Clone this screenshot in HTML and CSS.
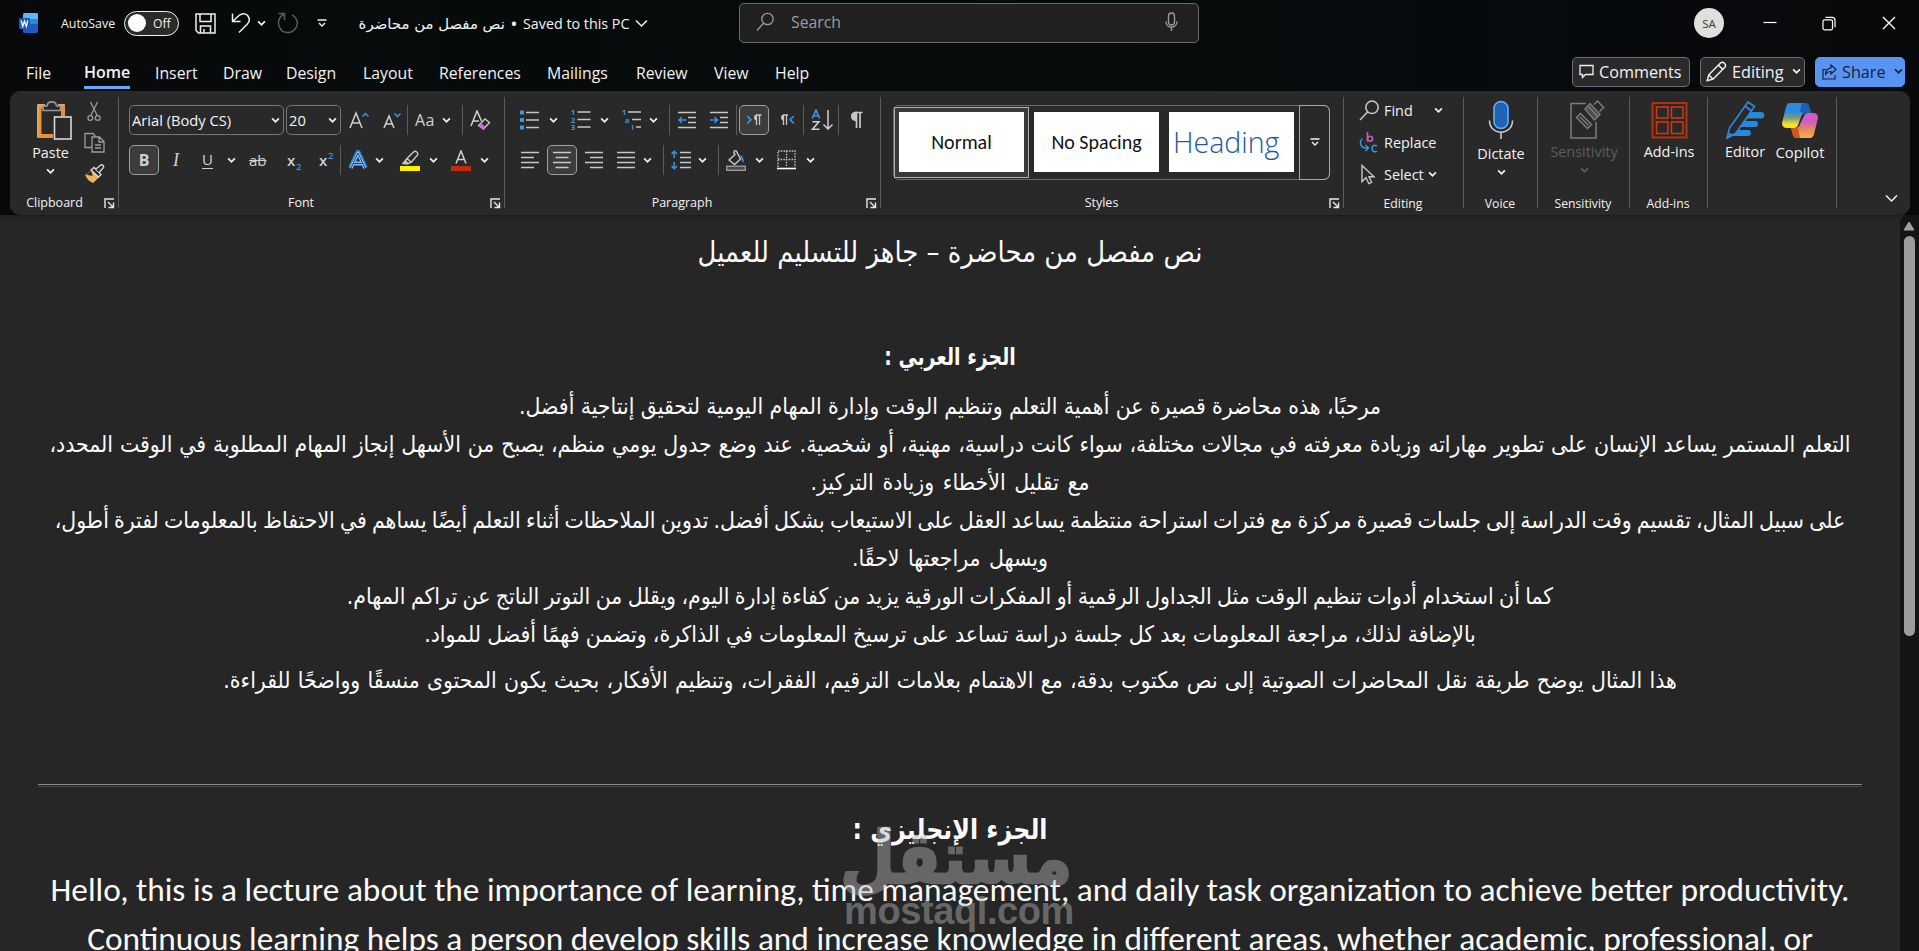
FILE: index.html
```html
<!DOCTYPE html>
<html lang="en">
<head>
<meta charset="utf-8">
<title>Word</title>
<link rel="stylesheet" href="styles.css">
</head>
<body>
<svg class="defs" width="0" height="0">
  <symbol id="chev" viewBox="0 0 8 6"><path d="M1 1.200l3 3 3-3" fill="none" stroke="currentColor" stroke-width="1.600"/></symbol>
  <symbol id="launch" viewBox="0 0 11 11"><path d="M1 10V1h9M4 4l5 5M9.500 4.500v5h-5" fill="none" stroke="#e8e8e8" stroke-width="1.400"/></symbol>
</svg>

<header class="top">
  <div class="titlebar">
    <svg class="i-word" width="20" height="22" viewBox="0 0 20 22"><rect x="4" y="1" width="15" height="20" rx="1.500" fill="#1b5cbe"/><path d="M4 2.500q0-1.500 1.500-1.500h12q1.500 0 1.500 1.500v5H4z" fill="#64b5f6"/><path d="M4 7.500h15v4.500H4z" fill="#2b8ad8"/><rect x="0" y="6" width="11" height="11" rx="1" fill="#185abd"/><path d="M2.200 8.500l1.500 6 1.800-5.500 1.800 5.500 1.500-6" fill="none" stroke="#fff" stroke-width="1.300"/></svg>
    <span class="autosave">AutoSave</span>
    <div class="toggle"><i></i><span>Off</span></div>
    <svg class="i-save" width="21" height="21" viewBox="0 0 21 21" fill="none" stroke="#f0f0f0" stroke-width="1.500"><path d="M1 1h19v19H3.500L1 17.500z"/><path d="M5 1v7.500h11V1M5.500 20v-7h10v7M9 20v-4"/></svg>
    <svg class="i-undo" width="20" height="22" viewBox="0 0 20 22" fill="none" stroke="#f0f0f0" stroke-width="1.500"><path d="M1.500 1.500v8h8M1.500 9.500L8 3.500c3-2.500 7-2.500 9 .5s1.500 6-.8 8.200L8 20.500"/></svg>
    <svg class="chev" width="9" height="7"><use href="#chev"/></svg>
    <svg class="i-redo" width="22" height="22" viewBox="0 0 22 22" fill="none" stroke="#5a5c5c" stroke-width="1.500"><path d="M1.500 1.500h6v6.500M7.300 2C1 5 0 12 3.500 17s11.500 4.500 15-.5S20 5.500 15 2.800"/></svg>
    <svg class="i-qat" width="10" height="9" viewBox="0 0 10 9" fill="none" stroke="#f0f0f0" stroke-width="1.400"><path d="M.5 1h9M2 4l3 3 3-3"/></svg>
    <div class="docname"><span dir="rtl" class="ar-name">نص مفصل من محاضرة</span><b>•</b><span>Saved to this PC</span><svg width="13" height="9" viewBox="0 0 13 9"><path d="M1 1.500l5.500 5.500L12 1.500" fill="none" stroke="#f0f0f0" stroke-width="1.500"/></svg></div>
    <div class="search">
      <svg width="19" height="20" viewBox="0 0 19 20" fill="none" stroke="#9a9a9a" stroke-width="1.300"><circle cx="11.500" cy="7" r="5.700"/><path d="M7.500 11.200L1 18.500"/></svg>
      <span>Search</span>
      <svg width="13" height="20" viewBox="0 0 13 20" fill="none" stroke="#9a9a9a" stroke-width="1.400"><rect x="3.500" y="1" width="6" height="12" rx="3"/><path d="M1 9.500c0 7.500 11 7.500 11 0M6.500 15.200V19"/></svg>
    </div>
    <div class="avatar">SA</div>
    <svg class="i-win" width="14" height="14" viewBox="0 0 14 14"><path d="M.5 6.500h13" stroke="#fff" stroke-width="1.200"/></svg>
    <svg class="i-win" width="14" height="15" viewBox="0 0 14 15" fill="none" stroke="#fff" stroke-width="1.200"><rect x="1" y="3.800" width="9.500" height="10" rx="1.500"/><path d="M3.500 1.300H10q3 0 3 3v7"/></svg>
    <svg class="i-win" width="14" height="14" viewBox="0 0 14 14"><path d="M1 1l12 12M13 1L1 13" stroke="#fff" stroke-width="1.400"/></svg>
  </div>

  <nav class="tabs">
    <span>File</span><span class="on">Home</span><span>Insert</span><span>Draw</span><span>Design</span><span>Layout</span><span>References</span><span>Mailings</span><span>Review</span><span>View</span><span>Help</span>
    <div class="actions">
      <div class="act comments"><svg width="15" height="15" viewBox="0 0 15 15" fill="none" stroke="#f0f0f0" stroke-width="1.300"><path d="M1 1.500h13v9H6.500l-3 3v-3H1z"/></svg>Comments</div>
      <div class="act editing"><svg width="21" height="21" viewBox="0 0 21 21" fill="none" stroke="#f0f0f0" stroke-width="1.500"><path d="M1.200 19.800l1.600-6L14.500 2c2.500-2.300 6.500 1.500 4.300 4.300L7 18.200zM12.500 4.200l4.300 4.200M3 14l3.800 4"/></svg>Editing<svg class="chev" width="9" height="7"><use href="#chev"/></svg></div>
      <div class="act share"><svg width="15" height="16" viewBox="0 0 15 16" fill="none" stroke="#12213a" stroke-width="1.200"><path d="M4 5.500H1V15h12v-4M9 1l5 4.500L9 10V7.500c-3 0-4.500 1-5.500 3.500 0-4 2-7 5.500-7z"/></svg>Share<svg class="chev" width="9" height="7"><use href="#chev"/></svg></div>
    </div>
  </nav>

  <section class="ribbon">
    <div class="group g-clip">
      <div class="clip-body">
        <div class="big paste">
          <svg width="36" height="40" viewBox="0 0 36 40" fill="none"><path d="M9 5.500H3.500V35H17M22 5.500h5V15" stroke="#e8913a" stroke-width="4"/><path d="M9 3.800H1.800V36.500M22 3.800h6.500" stroke="#f6cf8c" stroke-width="1"/><path d="M7 9.500V5h4c.5-5.500 9-5.500 9.500 0h4v4.500z" fill="#292929" stroke="#9a9a9a" stroke-width="1.600"/><rect x="18.500" y="16" width="16.500" height="22" fill="#292929" stroke="#d6d6d6" stroke-width="1.600"/></svg>
          <span>Paste</span><svg class="chev" width="9" height="7"><use href="#chev"/></svg>
        </div>
        <div class="clip-col">
          <svg width="14" height="21" viewBox="0 0 14 21" fill="none" stroke="#9c9c9c" stroke-width="1.300"><path d="M3.500 1l6.700 13.500M10.500 1L3.800 14.500"/><circle cx="3.300" cy="17" r="2.400"/><circle cx="10.700" cy="17" r="2.400"/></svg>
          <svg width="21" height="21" viewBox="0 0 21 21" fill="none" stroke="#9c9c9c" stroke-width="1.300"><path d="M7.500 15.500H1V1.500h8l2.500 3"/><path d="M8 5h7.500l4.500 4.500V20H8zM15 5v5h5M11 13h6M11 16h6"/></svg>
          <svg width="21" height="20" viewBox="0 0 21 20" fill="none" stroke="#d8d8d8" stroke-width="1.400"><path d="M1 10.500l7-4 7.500 6.500-6.500 6q-6-2.500-8-8.500z" fill="#f2b25c" stroke="none"/><path d="M1.500 10.500l6-3.500 1 5z" fill="#292929" stroke="none"/><path d="M7 6l3-2.500 7 7L14.500 13z" fill="#292929"/><path d="M12 5l4.500-3.800c2-1.200 4 1 2.700 2.700L15 8.500" fill="#292929"/></svg>
        </div>
      </div>
      <div class="label"><span>Clipboard</span><svg width="11" height="11"><use href="#launch"/></svg></div>
    </div>

    <div class="group g-font">
      <div class="row f1">
        <div class="combo name">Arial (Body CS)<svg class="chev" width="9" height="7"><use href="#chev"/></svg></div>
        <div class="combo size">20<svg class="chev" width="9" height="7"><use href="#chev"/></svg></div>
        <svg width="20" height="18" viewBox="0 0 20 18" fill="none"><path d="M1 17L7 2l6 15M3.200 12h7.600" stroke="#d0d0d0" stroke-width="1.500"/><path d="M13.500 5.500L16.500 2.500l3 3" stroke="#3a96e8" stroke-width="1.500"/></svg>
        <svg width="18" height="18" viewBox="0 0 18 18" fill="none"><path d="M1 17L6 5l5 12M3 13h6" stroke="#d0d0d0" stroke-width="1.500"/><path d="M11.500 2.500l3 3 3-3" stroke="#3a96e8" stroke-width="1.500"/></svg>
        <i class="sep"></i>
        <span class="aa">Aa</span>
        <svg class="chev" width="9" height="7"><use href="#chev"/></svg>
        <i class="sep"></i>
        <svg width="21" height="21" viewBox="0 0 21 21" fill="none"><path d="M1 16L7 1l4.500 10M3.200 11H9" stroke="#d0d0d0" stroke-width="1.500"/><path d="M8.500 15.500L15 9l4.500 3.500L13.500 19z" stroke="#c8c8c8" stroke-width="1.400"/><path d="M8.500 15.500l2.500-2.500 4.500 4-2 2.500z" fill="#d46ad0"/></svg>
      </div>
      <div class="row f2">
        <div class="press"><b>B</b></div>
        <span class="ital">I</span>
        <span class="undl">U</span>
        <svg class="chev" width="9" height="7"><use href="#chev"/></svg>
        <span class="strk">ab</span>
        <span class="sub">x<em>2</em></span>
        <span class="sup">x<em>2</em></span>
        <i class="sep"></i>
        <svg width="20" height="20" viewBox="0 0 20 20" fill="none" stroke-linejoin="round"><path d="M2.500 18L10 2l7.500 16M5.500 13.500h9" stroke="#2a7fd0" stroke-width="5"/><path d="M3 18L10 3l7 15M5.500 13.500h9" stroke="#9cd0ff" stroke-width="2.600"/><path d="M3 18L10 3l7 15M5.500 13.500h9" stroke="#1d3d63" stroke-width="1"/></svg>
        <svg class="chev" width="9" height="7"><use href="#chev"/></svg>
        <svg width="20" height="21" viewBox="0 0 20 21" fill="none"><path d="M3 13.500l4-5L13.500 2c2-2 5.500 1 3.800 3.200L11.500 12l-4 2zM7 8.500l4.500 4" stroke="#c8c8c8" stroke-width="1.400"/><path d="M2 14l4-4 2.500 3.500z" fill="#c8c8c8"/><path d="M0 16h20v5H0z" fill="#fff200"/></svg>
        <svg class="chev" width="9" height="7"><use href="#chev"/></svg>
        <svg width="20" height="21" viewBox="0 0 20 21" fill="none"><path d="M5 13.500L10 1l5 12.500M6.800 9.500h6.400" stroke="#d0d0d0" stroke-width="1.500"/><path d="M0 16h20v5H0z" fill="#c42b0c"/></svg>
        <svg class="chev" width="9" height="7"><use href="#chev"/></svg>
      </div>
      <div class="label"><span>Font</span><svg width="11" height="11"><use href="#launch"/></svg></div>
    </div>

    <div class="group g-para">
      <div class="row p1">
        <svg width="20" height="20" viewBox="0 0 20 20"><path d="M0 .5h4v4H0zM0 8h4v4H0zM0 15.500h4v4H0z" fill="#3a96e8"/><path d="M6 2.500h13M6 10h13M6 17.500h13" stroke="#c8c8c8" stroke-width="1.500"/></svg>
        <svg class="chev" width="9" height="7"><use href="#chev"/></svg>
        <svg width="22" height="28" viewBox="-1 -3.500 22 28"><g class="num"><text x="0" y="5.500">1</text><text x="0" y="13">2</text><text x="0" y="20.500">3</text></g><path d="M6.500 2.500h13M6.500 10h13M6.500 17.500h13" stroke="#c8c8c8" stroke-width="1.500"/></svg>
        <svg class="chev" width="9" height="7"><use href="#chev"/></svg>
        <svg width="22" height="28" viewBox="-1 -3.500 22 28"><g class="num"><text x="0" y="5.500">1</text><text x="3" y="13">a</text><text x="9.500" y="20.500">i</text></g><path d="M6 2.500h13M10 10h9M14 17.500h5" stroke="#c8c8c8" stroke-width="1.500"/></svg>
        <svg class="chev" width="9" height="7"><use href="#chev"/></svg>
        <i class="sep"></i>
        <svg width="19" height="20" viewBox="0 0 19 20" fill="none"><path d="M0 2.500h18M10 7.500h8M10 12.500h8M0 17.500h18" stroke="#c8c8c8" stroke-width="1.500"/><path d="M8.500 10H1M4 7l-3 3 3 3" stroke="#3a96e8" stroke-width="1.500"/></svg>
        <svg width="19" height="20" viewBox="0 0 19 20" fill="none"><path d="M0 2.500h18M10 7.500h8M10 12.500h8M0 17.500h18" stroke="#c8c8c8" stroke-width="1.500"/><path d="M0 10h7.500M4.500 7l3 3-3 3" stroke="#3a96e8" stroke-width="1.500"/></svg>
        <i class="sep"></i>
        <div class="press"><svg width="16" height="12" viewBox="0 0 16 12" fill="none"><path d="M1 2l4 3.700L1 9.500" stroke="#3a96e8" stroke-width="1.600"/><path d="M15.500 1H10M10.500 1v10M13.500 1v10" stroke="#c8c8c8" stroke-width="1.300"/><path d="M11 .5a3 3 0 0 0 0 6z" fill="#c8c8c8"/></svg></div>
        <svg width="16" height="12" viewBox="0 0 16 12" fill="none"><path d="M15 2l-4 3.700 4 3.800" stroke="#3a96e8" stroke-width="1.600"/><path d="M9 1H4M4.500 1v10M7.500 1v10" stroke="#c8c8c8" stroke-width="1.300"/><path d="M5 .5a3 3 0 0 0 0 6z" fill="#c8c8c8"/></svg>
        <i class="sep"></i>
        <svg width="22" height="22" viewBox="0 0 22 22" fill="none"><path d="M1.300 9.500L5 1l3.700 8.500M2.500 6.700h5" stroke="#3a96e8" stroke-width="1.600"/><path d="M1.500 12.700h6.500L1.500 20.200H8.500M17 1v19M12.500 15.500L17 20l4.500-4.500" stroke="#d0d0d0" stroke-width="1.500"/></svg>
        <i class="sep"></i>
        <svg width="14" height="18" viewBox="0 0 14 18" fill="none"><path d="M13.500 1.500H6M7.500 1.500V17M11 1.500V17" stroke="#c8c8c8" stroke-width="1.700"/><path d="M8 .7H6a4.700 4.700 0 0 0 0 9.300h2z" fill="#c8c8c8"/></svg>
      </div>
      <div class="row p2">
        <svg width="19" height="18" viewBox="0 0 19 18"><path d="M0 1.500h18M0 6.500h13M0 11.500h18M0 16.500h13" stroke="#c8c8c8" stroke-width="1.500"/></svg>
        <div class="press"><svg width="18" height="18" viewBox="0 0 18 18"><path d="M0 1.500h18M2.500 6.500h13M0 11.500h18M2.500 16.500h13" stroke="#c8c8c8" stroke-width="1.500"/></svg></div>
        <svg width="18" height="18" viewBox="0 0 18 18"><path d="M0 1.500h18M5 6.500h13M0 11.500h18M5 16.500h13" stroke="#c8c8c8" stroke-width="1.500"/></svg>
        <svg width="18" height="18" viewBox="0 0 18 18"><path d="M0 1.500h18M0 6.500h18M0 11.500h18M0 16.500h18" stroke="#c8c8c8" stroke-width="1.500"/></svg>
        <svg class="chev" width="9" height="7"><use href="#chev"/></svg>
        <i class="sep"></i>
        <svg width="20" height="20" viewBox="0 0 20 20" fill="none"><path d="M9 2.500h11M9 7.500h11M9 12.500h11M9 17.500h11" stroke="#c8c8c8" stroke-width="1.500"/><path d="M3.200 8V1.500M.5 4l2.700-2.700L6 4M3.200 12v6.500M.5 16l2.700 2.700L6 16" stroke="#3a96e8" stroke-width="1.500"/></svg>
        <svg class="chev" width="9" height="7"><use href="#chev"/></svg>
        <i class="sep"></i>
        <svg width="20" height="21" viewBox="0 0 20 21" fill="none"><path d="M9 4.500L3 10l5.500 4.500L14.500 9 10.500 1.500c-1.500-2-3 0-2.500 1.500z" stroke="#c8c8c8" stroke-width="1.400"/><path d="M14 5c3 1 4 4 3.500 8-1.500-1-2-3-2-4.500z" fill="#3a96e8"/><rect x=".7" y="16.200" width="18.600" height="4.100" fill="#4a4a4a" stroke="#a8a8a8" stroke-width="1.200"/></svg>
        <svg class="chev" width="9" height="7"><use href="#chev"/></svg>
        <svg width="19" height="20" viewBox="0 0 19 20" fill="none"><path d="M1 17V1h17v16M9.500 1v16M1 9.500h17" stroke="#c8c8c8" stroke-width="1.300" stroke-dasharray="1.500 1.200"/><path d="M0 18.500h19" stroke="#fff" stroke-width="1.600"/></svg>
        <svg class="chev" width="9" height="7"><use href="#chev"/></svg>
      </div>
      <div class="label"><span>Paragraph</span><svg width="11" height="11"><use href="#launch"/></svg></div>
    </div>

    <div class="group g-styles">
      <div class="gallery">
        <div class="cell sel"><div>Normal</div></div>
        <div class="cell"><div>No Spacing</div></div>
        <div class="cell"><div class="h1style"><span>Heading 1</span></div></div>
        <div class="more"><svg width="10" height="9" viewBox="0 0 10 9" fill="none" stroke="#f0f0f0" stroke-width="1.400"><path d="M.5 1h9M2 4l3 3 3-3"/></svg></div>
      </div>
      <div class="label"><span>Styles</span><svg width="11" height="11"><use href="#launch"/></svg></div>
    </div>

    <div class="group g-edit">
      <div class="cmd"><svg width="20" height="21" viewBox="0 0 20 21" fill="none" stroke="#c8c8c8" stroke-width="1.500"><circle cx="13" cy="7.300" r="6.200"/><path d="M8.500 12L1 20"/></svg><span>Find</span><svg class="chev far" width="9" height="7"><use href="#chev"/></svg></div>
      <div class="cmd"><svg width="20" height="21" viewBox="0 0 20 21" fill="none"><path d="M8.500 0v9.500" stroke="#c05fb4" stroke-width="1.700"/><circle cx="11" cy="6.700" r="2.500" stroke="#c05fb4" stroke-width="1.600"/><path d="M3.500 6.500C.5 9 .5 14.500 6 16h2.500M6.500 13l2.800 3-2.800 3M18 14c-3-2-5 0-5 2.500s2.500 4.500 5 2.500" stroke="#3a96e8" stroke-width="1.500"/></svg><span>Replace</span></div>
      <div class="cmd"><svg width="20" height="21" viewBox="0 0 20 21" fill="none" stroke="#c8c8c8" stroke-width="1.400"><path d="M3 1.500v16l4-3.800 2.800 6 2.800-1.200L10 12.800h5z"/></svg><span>Select</span><svg class="chev near" width="9" height="7"><use href="#chev"/></svg></div>
      <div class="label solo"><span>Editing</span></div>
    </div>

    <div class="group g-voice">
      <div class="big">
        <svg width="26" height="40" viewBox="0 0 26 40" fill="none"><rect x="6" y="1.500" width="14" height="27" rx="7" fill="#2063b4" stroke="#5fb0f5" stroke-width="1.600"/><path d="M1.500 20.500c0 15.500 23 15.500 23 0M13 32v7" stroke="#d0d0d0" stroke-width="1.500"/></svg>
        <span>Dictate</span><svg class="chev" width="9" height="7"><use href="#chev"/></svg>
      </div>
      <div class="label solo"><span>Voice</span></div>
    </div>

    <div class="group g-sens">
      <div class="big dim">
        <svg width="36" height="40" viewBox="0 0 36 40" fill="none" stroke="#7c7c7c" stroke-width="1.500"><path d="M17 3.500H2V38h25V22"/><path d="M7.500 17.500l4-4 11 11-4 4zM10.800 16.800l8.500 8.500"/><path d="M16 9l5-5.500 10 11-5.500 5.500z" fill="#4a4a4a"/><path d="M25 4.500l3.500-3.500 6 6.500-4 4M19.500 6.500l9 10"/></svg>
        <span>Sensitivity</span><svg class="chev" width="9" height="7"><use href="#chev"/></svg>
      </div>
      <div class="label solo"><span>Sensitivity</span></div>
    </div>

    <div class="group g-add">
      <div class="big">
        <svg width="37" height="40" viewBox="0 0 37 40" fill="none" stroke="#d8380e" stroke-width="1.500"><rect x="1.500" y="3" width="34" height="34.500" stroke-width="2" stroke="#b5300f"/><path d="M5.500 7h11.500v11H5.500zM20.500 7H32v11H20.500zM5.500 22h11.500v11.500H5.500zM20.500 22H32v11.500H20.500z"/></svg>
        <span>Add-ins</span>
      </div>
      <div class="label solo"><span>Add-ins</span></div>
    </div>

    <div class="group g-cop">
      <div class="big ed">
        <svg width="40" height="40" viewBox="0 0 40 40" fill="none"><path d="M21 12h15a3 3 0 0 1 0 6.500H17zM15 21h15a3 3 0 0 1 0 6H11zM10 30h13a3 3 0 0 1 0 6H6z" fill="#2b88d8"/><path d="M2 38l2.500-10L23 2l6.500 4.500L11 33zM20 6l6.500 5" fill="#292929" stroke="#2b88d8" stroke-width="1.700"/><path d="M2 39l2.500-6.500 4 3z" fill="#2b88d8"/></svg>
        <span>Editor</span>
      </div>
      <div class="big co">
        <svg width="38" height="40" viewBox="0 0 38 40">
          <defs><linearGradient id="ca" x1="0" y1="0" x2="0" y2="1"><stop offset=".35" stop-color="#2b8be0"/><stop offset=".6" stop-color="#7f9a80"/><stop offset=".85" stop-color="#f5e426"/></linearGradient><linearGradient id="cb" x1="0" y1="0" x2="0" y2="1"><stop offset=".35" stop-color="#cf5cc4"/><stop offset=".7" stop-color="#e8914e"/><stop offset="1" stop-color="#f0b060"/></linearGradient></defs>
          <path d="M9 3h15q3 0 4 3l2 7h-5q-4 0-5 4l-3 8q-1 3-4 3H6q-5 0-5-5L5 7q1-4 4-4z" fill="url(#ca)"/>
          <path d="M21 3h3q3 0 4 3l2 7h-8q-3 0-3-3z" fill="#1c5fb4"/>
          <path d="M29 38H16q-3 0-4-3l-2-7h4q4 0 5-4l4-8q1-3 4-3h5q5 0 5 5l-4 16q-1 4-4 4z" fill="url(#cb)"/>
          <path d="M10 28h7l2 10h-3q-3 0-4-3z" fill="#d2571c"/>
        </svg>
        <span>Copilot</span>
      </div>
    </div>
    <div class="collapse"><svg width="13" height="9" viewBox="0 0 13 9"><path d="M1 1.500l5.500 5.500L12 1.500" fill="none" stroke="#f0f0f0" stroke-width="1.500"/></svg></div>
  </section>
</header>

<main class="stage">
  <article class="page">
    <h1 dir="rtl">نص مفصل من محاضرة – جاهز للتسليم للعميل</h1>
    <h2 dir="rtl">الجزء العربي :</h2>
    <p dir="rtl" class="l1">مرحبًا، هذه محاضرة قصيرة عن أهمية التعلم وتنظيم الوقت وإدارة المهام اليومية لتحقيق إنتاجية أفضل.</p>
    <p dir="rtl" class="l2">التعلم المستمر يساعد الإنسان على تطوير مهاراته وزيادة معرفته في مجالات مختلفة، سواء كانت دراسية، مهنية، أو شخصية. عند وضع جدول يومي منظم، يصبح من الأسهل إنجاز المهام المطلوبة في الوقت المحدد،</p>
    <p dir="rtl" class="l3">مع تقليل الأخطاء وزيادة التركيز.</p>
    <p dir="rtl" class="l4">على سبيل المثال، تقسيم وقت الدراسة إلى جلسات قصيرة مركزة مع فترات استراحة منتظمة يساعد العقل على الاستيعاب بشكل أفضل. تدوين الملاحظات أثناء التعلم أيضًا يساهم في الاحتفاظ بالمعلومات لفترة أطول،</p>
    <p dir="rtl" class="l5">ويسهل مراجعتها لاحقًا.</p>
    <p dir="rtl" class="l6">كما أن استخدام أدوات تنظيم الوقت مثل الجداول الرقمية أو المفكرات الورقية يزيد من كفاءة إدارة اليوم، ويقلل من التوتر الناتج عن تراكم المهام.</p>
    <p dir="rtl" class="l7">بالإضافة لذلك، مراجعة المعلومات بعد كل جلسة دراسة تساعد على ترسيخ المعلومات في الذاكرة، وتضمن فهمًا أفضل للمواد.</p>
    <p dir="rtl" class="l8">هذا المثال يوضح طريقة نقل المحاضرات الصوتية إلى نص مكتوب بدقة، مع الاهتمام بعلامات الترقيم، الفقرات، وتنظيم الأفكار، بحيث يكون المحتوى منسقًا وواضحًا للقراءة.</p>
    <hr>
    <h2 dir="rtl" class="en-head">الجزء الإنجليزي :</h2>
    <p class="en">Hello, this is a lecture about the importance of learning, time management, and daily task organization to achieve better productivity.</p>
    <p class="en">Continuous learning helps a person develop skills and increase knowledge in different areas, whether academic, professional, or</p>
  </article>
  <aside class="scroll"><svg width="12" height="10" viewBox="0 0 12 10"><path d="M6 1l5 8H1z" fill="#a0a0a0" stroke="#a0a0a0" stroke-linejoin="round"/></svg><i></i></aside>
</main>

<div class="watermark"><span class="wm-ar" dir="rtl">مستقل</span><span class="wm-en">mostaql.com</span></div>
</body>
</html>
```
FILE: styles.css
```css
* { box-sizing: border-box; margin: 0; padding: 0; }
body {
  width: 1919px; height: 951px; overflow: hidden;
  background: #08090b; color: #f2f2f2;
  font-family: "Open Sans", "DejaVu Sans", sans-serif;
  font-size: 14.4px; white-space: nowrap;
}
svg { display: block; flex: none; }
.defs { position: absolute; }
i, em { font-style: normal; }
.chev { color: #f0f0f0; }

.top { height: 215px; background: linear-gradient(90deg, #08090a, #060b0a 25%, #050c0a 60%, #060a0e 75%, #08090b); }

/* title bar */
.titlebar { height: 47px; display: flex; align-items: center; padding-left: 19px; padding-bottom: 1px; }
.autosave { font-size: 12.4px; margin-left: 22px; width: 63px; }
.toggle { width: 55px; height: 25px; border: 1.5px solid #f0f0f0; border-radius: 13px; background: #2a2a2a; display: flex; align-items: center; padding-left: 3px; font-size: 12.2px; }
.toggle i { width: 18px; height: 18px; border-radius: 50%; background: #fff; margin-right: 7px; }
.i-save { margin-left: 16px; }
.i-undo { margin-left: 15px; margin-right: 6px; }
.i-redo { margin-left: 11px; }
.i-qat { margin-left: 18px; }
.docname { display: flex; align-items: center; margin-left: 31px; width: 381px; font-size: 14.3px; padding-top: 1px; }
.ar-name { font-family: "DejaVu Sans", sans-serif; font-size: 14.9px; width: 147px; }
.docname b { width: 18px; text-align: center; }
.docname svg { margin-left: 6px; }
.search { width: 460px; height: 40px; border: 1px solid #6b6b6b; border-radius: 5px; background: #202020; color: #9c9c9c; display: flex; align-items: center; padding: 0 20px 2px 16px; font-size: 15.8px; }
.search span { margin-left: 16px; margin-right: auto; }
.avatar { width: 30px; height: 30px; border-radius: 50%; background: #e0dfde; color: #3a3a3a; margin-left: 495px; font-size: 11.5px; display: flex; align-items: center; justify-content: center; }
.i-win { margin-left: 39px; margin-right: 7px; }
.i-win ~ .i-win { margin-left: 38px; margin-right: 8px; }

/* tabs */
.tabs { height: 44px; display: grid; align-items: center; font-size: 15.8px; padding: 8px 14px 0 26px;
  grid-template-columns: 58px 71px 68px 63px 77px 76px 108px 89px 78px 61px auto 1fr; }
.tabs > span { line-height: 22px; padding-bottom: 1px; justify-self: start; }
.tabs .on { font-weight: 600; height: 32px; padding-top: 4px; border-bottom: 3px solid #62abf5; font-size: 16px; }
.actions { display: flex; justify-self: end; gap: 10px; padding-bottom: 3px; }
.act { height: 30px; border: 1px solid #6e6e6e; border-radius: 5px; background: #2a2a2a; display: flex; align-items: center; gap: 5px; font-size: 16.2px; padding-left: 6px; }
.comments { width: 118px; }
.editing { width: 105px; padding-left: 5px; }
.editing .chev, .share .chev { margin-left: 3px; }
.share { width: 90px; background: #5a94f2; border-color: #5a94f2; color: #12213a; }
.share .chev { color: #12213a; }

/* ribbon */
.ribbon { margin: 0 9px 0 10px; height: 124px; border-radius: 10px; background: #292929; display: flex; }
.group { height: 124px; flex: none; padding-top: 14px; background: linear-gradient(#5c5c5c, #5c5c5c) no-repeat right 6px / 1px 111px; }
.g-clip { width: 109px; } .g-font { width: 386px; } .g-para { width: 376px; } .g-styles { width: 463px; }
.g-edit { width: 120px; } .g-voice { width: 74px; } .g-sens { width: 92px; } .g-add { width: 78px; } .g-cop { width: 129px; }
.row { height: 30px; margin-bottom: 10px; display: grid; align-items: center; justify-content: start; justify-items: start; }
.row .sep { width: 1px; height: 30px; background: #5c5c5c; }
.label { height: 20px; margin-top: 18px; display: grid; grid-template-columns: 1fr 20px; align-items: center; justify-items: center; font-size: 12.5px; line-height: 20px; }
.label span { position: relative; left: -1px; }
.label svg { justify-self: start; margin: 1px 0 0 5px; }
.label.solo { grid-template-columns: 1fr; font-size: 12.2px; }

.clip-body { display: flex; height: 80px; margin-top: -4px; padding-left: 14px; }
.big { display: flex; flex-direction: column; align-items: center; font-size: 14.4px; height: 80px; line-height: 20px; }
.big span { margin-top: 2px; }
.big .chev { margin-top: 5px; }
.paste { width: 53px; }
.paste > svg:first-child { margin-left: 6px; }
.clip-col { margin-left: 5px; width: 24px; display: grid; grid-template-rows: 31px 32px 22px; justify-items: center; align-content: start; }
.g-clip .label { margin-top: 12px; padding-left: 2px; }

.f1 { margin-left: 10px; grid-template-columns: 157px 63px 34px 24px 8px 27px 20px 8px 21px; }
.combo { height: 30px; border: 1px solid #757575; border-radius: 5px; display: flex; align-items: center; justify-content: space-between; padding: 0 3px 0 2px; font-size: 14.7px; color: #f4f4f4; }
.name { width: 155px; }
.size { width: 55px; }
.aa { font-size: 16px; letter-spacing: .3px; color: #d0d0d0; }
.f2 { margin-left: 10px; grid-template-columns: 44px 29px 25px 22px 38px 32px 21px 8px 27px 25px 29px 22px 29px 9px; color: #d0d0d0; }
.press { width: 30px; height: 30px; border: 1px solid #a0a0a0; border-radius: 5px; background: #3c3c3c; display: flex; align-items: center; justify-content: center; }
.press b { font-size: 16px; }
.ital { font: italic 18px "Liberation Serif", serif; }
.undl { font-size: 15px; line-height: 17px; border-bottom: 1.5px solid #d0d0d0; }
.strk { font-size: 15px; text-decoration: line-through; }
.sub, .sup { font-size: 15px; font-weight: 600; }
.sub em, .sup em { font-size: 9px; color: #3a96e8; position: relative; top: 4px; left: 1px; }
.sup em { top: -7px; }
.num { font: bold 7.5px "Open Sans", sans-serif; fill: #3a96e8; }

.p1 { margin-left: 15px; grid-template-columns: 29px 21px 30px 21px 28px 20px 9px 32px 26px 3px 40px 24px 8px 27px 11px 14px; }
.p2 { margin-left: 16px; grid-template-columns: 26px 38px 32px 26px 20px 8px 27px 20px 8px 29px 22px 29px 9px; }

.gallery { margin-left: 12px; width: 437px; height: 75px; border: 1px solid #6a6a6a; border-radius: 6px; display: flex; padding: 1px 0 0 0; }
.cell { width: 135px; height: 71px; padding: 5px; color: #111; }
.cell.sel { outline: 1px solid #b0b0b0; outline-offset: -1px; background: #3a3a3a; }
.cell > div { background: #fff; width: 125px; height: 60px; display: flex; align-items: center; justify-content: center; font: 20px Carlito, Lato, sans-serif; overflow: hidden; }
.cell > .h1style { font: 300 28.500px "Open Sans", sans-serif; color: #2058a0; justify-content: flex-start; padding: 0 4px; }
.h1style span { overflow: hidden; width: 117px; }
.more { margin: -2px -1px -1px auto; width: 31px; border: 1px solid #a8a8a8; border-radius: 0 6px 6px 0; display: flex; align-items: center; justify-content: center; }
.gallery + .label { margin-top: 13px; }

.g-edit { padding-top: 3px; }
.cmd { height: 32px; display: flex; align-items: center; padding-left: 15px; }
.cmd span { margin-left: 5px; }
.far { margin-left: 21px; }
.near { margin-left: 4px; }
.g-edit .label { margin-top: 4px; }

.g-voice, .g-sens, .g-add, .g-cop { padding-top: 9px; }
.g-voice .label, .g-sens .label, .g-add .label { margin-top: 14px; }
.g-voice .big span { margin-top: 4px; }
.dim span { color: #5e5e5e; }
.dim .chev { color: #5e5e5e; }
.g-sens .big > svg:first-child { margin-left: 6px; }
.g-cop { display: flex; padding-left: 14px; }
.ed { width: 46px; } .co { width: 64px; font-size: 14.8px; }
.collapse { margin: 103px 0 0 auto; padding-right: 12px; }

/* document */
.stage { height: 736px; display: flex; background: #262626; }
.page { width: 1900px; padding-top: 18px; text-align: center; overflow: hidden; color: #fafafa; box-shadow: inset 0 3px 3px -2px #1a1a1a; }
.page h1, .page h2, .page p { font-family: "DejaVu Sans Condensed", "DejaVu Sans", sans-serif; font-stretch: condensed; font-weight: 400; line-height: 38px; height: 38px; }
.page h1 { font-size: 28.800px; }
.page h2 { font-size: 24px; font-weight: 700; margin-top: 67px; margin-bottom: 11px; transform: scaleX(.875); }
.page p { font-size: 22.8px; }
.page .l1 { word-spacing: -.2px; }
.page .l2 { word-spacing: .35px; }
.page .l3 { word-spacing: 2.200px; }
.page .l4 { word-spacing: -1.400px; }
.page .l5 { word-spacing: 2px; }
.page .l6 { word-spacing: -1.100px; }
.page .l7 { word-spacing: -.3px; }
.page .l8 { word-spacing: .75px; margin-top: 8px; }
.page hr { margin: 85px 38px 0; height: 3px; border: 0; border-top: 1px solid #8a8a8a; border-bottom: 1px solid #4a4a4a; }
.page .en-head { font-size: 27.500px; margin-top: 23px; margin-bottom: 17px; transform: scaleX(.96); }
.page .en { font: 33.350px/49px Carlito, Lato, sans-serif; height: 49px; }
.scroll { width: 19px; background: #141414; border-radius: 8px 0 0 0; display: flex; flex-direction: column; align-items: center; padding-top: 6px; padding-right: 1px; gap: 5px; }
.scroll i { width: 11px; height: 400px; border-radius: 6px; background: #9c9c9c; }

/* watermark over the page */
.watermark { position: absolute; left: 844px; top: 815px; width: 230px; height: 120px; color: #b7b7b7; opacity: .44; }
.wm-ar, .wm-en { position: absolute; left: 0; transform-origin: 0 0; }
.wm-ar { top: -3px; left: -4px; font: bold 62px/80px "DejaVu Sans", sans-serif; -webkit-text-stroke: 2px #b7b7b7; transform: scale(1.025, 1.17); }
.wm-en { top: 76px; font: bold 38px/40px "Liberation Sans", sans-serif; letter-spacing: -.4px; }
```
